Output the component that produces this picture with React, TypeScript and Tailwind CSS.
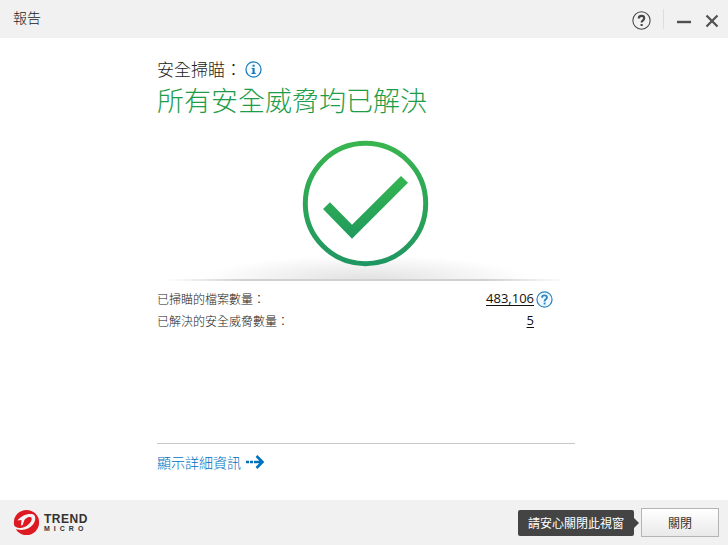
import React from 'react';

interface StatRowProps {
  label: string;
  value: string;
  children?: React.ReactNode;
}

const QuestionMark: React.FC = () => (
  <path
    d="M6.4 7.1C6.4 5.5 7.5 4.6 9 4.6s2.6.9 2.6 2.3c0 1.9-2.5 2-2.5 4.1M9.1 12.2v2"
    fill="none"
    stroke="currentColor"
    strokeWidth="2"
  />
);

const StatRow: React.FC<StatRowProps> = ({ label, value, children }) => (
  <div className="flex h-[22px] items-center">
    <dt className="flex-1 text-[12px] font-light text-[#222222]">{label}</dt>
    <dd className="flex items-center gap-[2px]">
      <a href="#files" className="font-['Open_Sans',sans-serif] text-[13px] text-[#111111] underline underline-offset-2">
        {value}
      </a>
      <span className="flex w-[18px]">{children}</span>
    </dd>
    <span className="w-[21px]" />
  </div>
);

const ResultArt: React.FC = () => (
  <svg viewBox="0 0 418 150" className="block h-[150px] w-full" aria-hidden="true">
    <defs>
      <linearGradient id="green" gradientUnits="userSpaceOnUse" x1="0" y1="6" x2="0" y2="131">
        <stop offset="0" stopColor="#39b54f" />
        <stop offset="1" stopColor="#1f9662" />
      </linearGradient>
      <linearGradient id="tick" gradientUnits="userSpaceOnUse" x1="0" y1="41" x2="0" y2="104">
        <stop offset="0" stopColor="#35b54f" />
        <stop offset="1" stopColor="#1f9a5e" />
      </linearGradient>
      <linearGradient id="floor" x1="0" y1="0" x2="1" y2="0">
        <stop offset="0" stopColor="#d0d0d0" stopOpacity="0" />
        <stop offset="0.2" stopColor="#d0d0d0" />
        <stop offset="0.8" stopColor="#d0d0d0" />
        <stop offset="1" stopColor="#d0d0d0" stopOpacity="0" />
      </linearGradient>
      <radialGradient id="shade" cx="0.5" cy="1" r="0.5" gradientTransform="translate(0 -1) scale(1 2)">
        <stop offset="0" stopColor="#000" stopOpacity="0.12" />
        <stop offset="0.5" stopColor="#000" stopOpacity="0.06" />
        <stop offset="1" stopColor="#000" stopOpacity="0" />
      </radialGradient>
    </defs>
    <rect x="44" y="120" width="330" height="25" fill="url(#shade)" />
    <rect x="9" y="144" width="400" height="2" fill="url(#floor)" />
    <circle cx="208.5" cy="68.5" r="60.2" fill="#fff" stroke="url(#green)" strokeWidth="5" />
    <path d="M173 67.3 166 74l29 29.7 56-56-7-6.7-49 48.7Z" fill="url(#tick)" />
  </svg>
);

const BrandLogo: React.FC = () => (
  <div className="flex items-center gap-1">
    <svg viewBox="0 0 27 27" className="h-[27px] w-[27px]" aria-hidden="true">
      <circle cx="13.5" cy="13.5" r="12.6" fill="#dd1a22" />
      <path
        d="M4.5 11.5C8 7 13 4.500 19 5c4.500 1 4 6.500 1 10.500-4 5-11 7-19 4L0 15.500c2 3 5.500 4 9 3.200 5-1 9.500-5 9.700-8.700 0-2-2-2.300-4-1.500-2.200.9-3.500 2.500-4 4.500l-1 3-1.700.6.500-5.600Z"
        fill="#f4f4f4"
      />
    </svg>
    <div className="font-['Liberation_Sans',sans-serif] text-[#333333]">
      <div className="text-[12px] leading-[12px] font-bold tracking-[0.5px]">TREND</div>
      <div className="text-[7px] leading-[7px] font-bold tracking-[4px]">MICRO</div>
    </div>
  </div>
);

export default function App() {
  return (
    <div className="flex min-h-screen flex-col bg-white font-['Noto_Sans_CJK_TC',sans-serif] text-[#222222]">
      <header className="flex h-[38px] items-center bg-[#f1f1f1] pr-2 pl-[13px]">
        <h1 className="flex-1 pb-[3px] text-[14px] font-light">報告</h1>
        <button type="button" aria-label="說明" className="mt-[2px] text-[#444444]">
          <svg viewBox="0 0 18 18" className="h-[19px] w-[19px]">
            <circle cx="9" cy="9" r="8.2" fill="none" stroke="currentColor" strokeWidth="1" />
            <QuestionMark />
          </svg>
        </button>
        <span className="mx-3 h-5 w-px bg-[#dddddd]" />
        <button type="button" aria-label="最小化" className="mt-1 text-[#505050]">
          <svg viewBox="0 0 16 16" className="h-4 w-4">
            <path d="M1 9h14" stroke="currentColor" strokeWidth="2.4" />
          </svg>
        </button>
        <button type="button" aria-label="關閉視窗" className="mt-1 ml-3 text-[#505050]">
          <svg viewBox="0 0 16 16" className="h-4 w-4">
            <path d="m2.5 2.5 11 11m0-11-11 11" stroke="currentColor" strokeWidth="2.2" />
          </svg>
        </button>
      </header>

      <main className="flex-1 pt-[19px] pl-1">
        <div className="mx-auto max-w-[418px]">
          <div className="flex h-6 items-center">
            <h2 className="text-[17px] font-light">安全掃瞄：</h2>
            <button type="button" aria-label="資訊" className="ml-[3px] text-[#1679bd]">
              <svg viewBox="0 0 18 18" className="h-[17px] w-[17px]">
                <circle cx="9" cy="9" r="8" fill="#f6fbff" stroke="currentColor" strokeWidth="1.3" />
                <path d="M8 4h2.2v2H8ZM7 7.3h3.2v5.2h1.100v1.300H6.900v-1.300H8V8.600H7Z" fill="currentColor" />
              </svg>
            </button>
          </div>
          <p className="text-[27px] leading-[38px] font-light text-[#1d9d48]">所有安全威脅均已解決</p>

          <div className="pt-4">
            <ResultArt />
          </div>

          <dl className="h-[159px] border-b border-[#c8c8c8] pt-[3px]">
            <StatRow label="已掃瞄的檔案數量：" value="483,106">
              <button type="button" aria-label="關於檔案數量" className="text-[#2f86c1]">
                <svg viewBox="0 0 18 18" className="h-[17px] w-[17px]">
                  <circle cx="9" cy="9" r="8" fill="#f1f9ff" stroke="currentColor" strokeWidth="1.3" />
                  <QuestionMark />
                </svg>
              </button>
            </StatRow>
            <StatRow label="已解決的安全威脅數量：" value="5" />
          </dl>

          <a href="#details" className="mt-[7px] flex h-[22px] items-center gap-[5px] text-[14px] font-light text-[#0071bc]">
            顯示詳細資訊
            <svg viewBox="0 0 20 16" className="h-4 w-5" aria-hidden="true">
              <path d="M0 8h3m1 0h3m1 0h9M10.5 2l6 6-6 6" fill="none" stroke="currentColor" strokeWidth="2.6" />
            </svg>
          </a>
        </div>
      </main>

      <footer className="flex h-[45px] items-center bg-[#f1f1f1] pr-[9px] pl-[13px]">
        <BrandLogo />
        <div role="tooltip" className="ml-auto rounded-xs bg-[#444444] px-[10px] text-[12px] leading-[26px] text-white">
          請安心關閉此視窗
        </div>
        <svg viewBox="0 0 5 10" className="mr-[2px] h-[10px] w-[5px]" aria-hidden="true">
          <path d="M0 0 5 5 0 10Z" fill="#444444" />
        </svg>
        <button
          type="button"
          className="h-[29px] w-[78px] border border-[#b5b5b5] bg-linear-to-b from-white to-[#e9e9e9] text-[12px] text-[#333333]"
        >
          關閉
        </button>
      </footer>
    </div>
  );
}
